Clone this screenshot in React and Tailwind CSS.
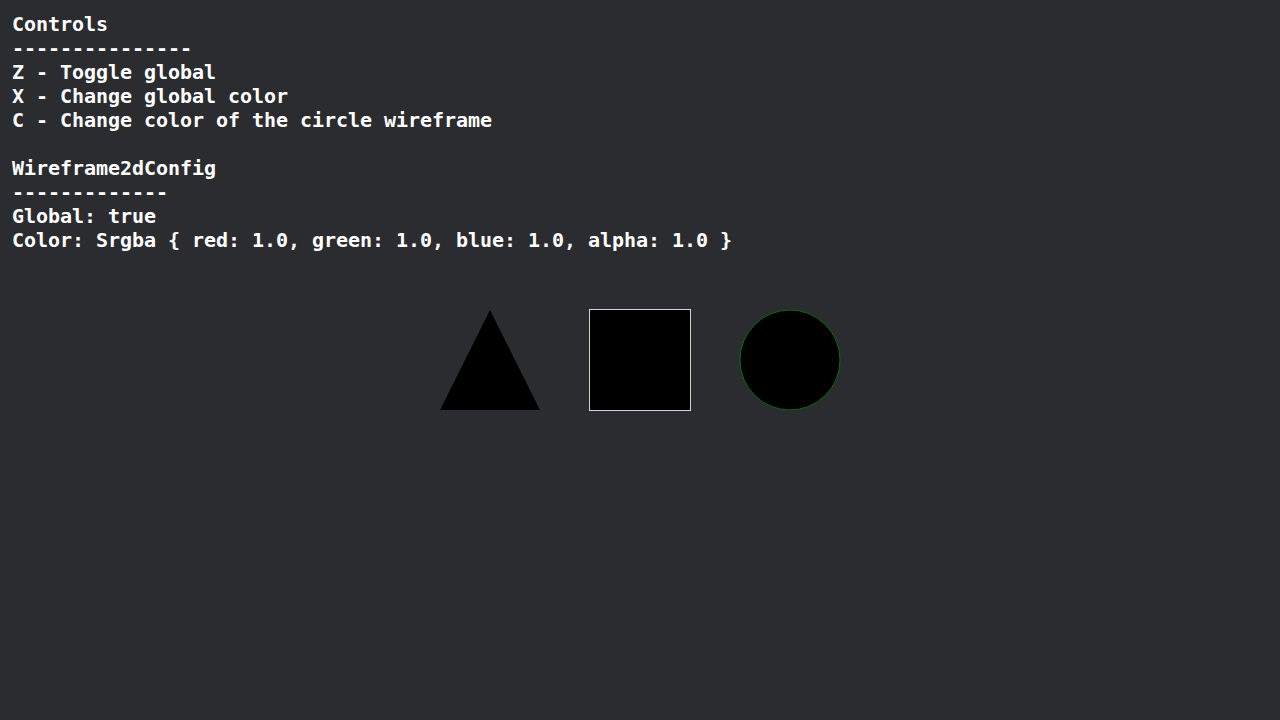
// Wireframe 2D scene: controls overlay + three meshes

import React from "react";

const LINES = [
  "Controls",
  "---------------",
  "Z - Toggle global",
  "X - Change global color",
  "C - Change color of the circle wireframe",
  "",
  "Wireframe2dConfig",
  "-------------",
  "Global: true",
  "Color: Srgba { red: 1.0, green: 1.0, blue: 1.0, alpha: 1.0 }",
];

const Shapes = () => (
  <svg width="402" height="103" viewBox="0 0 402 103" className="block">
    {/* triangle */}
    <polygon points="51,1 1,101 101,101" fill="#000000" />
    {/* square with white wireframe */}
    <rect x="150.5" y="0.5" width="101" height="101" fill="#000000" stroke="#d4d4d4" strokeWidth="1" />
    {/* circle with green wireframe */}
    <circle cx="351" cy="51" r="50" fill="#000000" stroke="#0b6b0b" strokeWidth="1" />
  </svg>
);

export default function App() {
  return (
    <div className="w-[1280px] h-[720px] bg-[#2b2c2f] overflow-hidden flex flex-col">
      <div className="p-3 pb-0 text-[20px] leading-[24px] font-bold tracking-[-0.04px] text-white font-['DejaVu_Sans_Mono',monospace] whitespace-pre">
        {LINES.map((l, i) => (
          <div key={i} className="h-6">{l}</div>
        ))}
      </div>
      <div className="mt-[57px] flex justify-center">
        <Shapes />
      </div>
    </div>
  );
}
